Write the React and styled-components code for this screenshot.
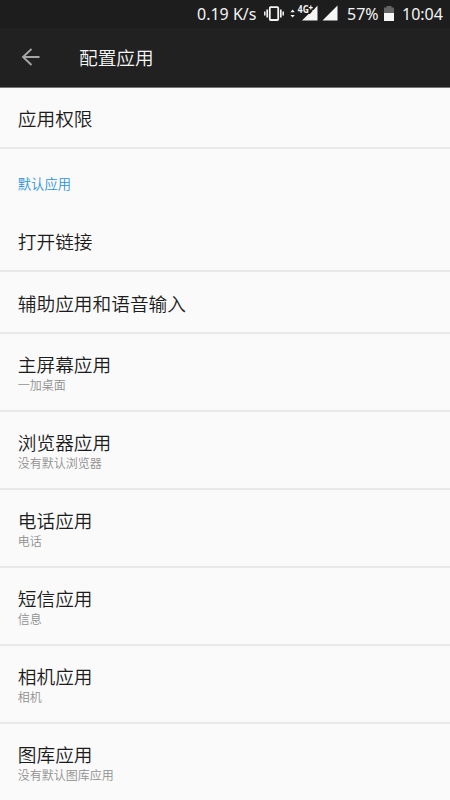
import React from "react";
import styled, { createGlobalStyle } from "styled-components";

const GlobalStyle = createGlobalStyle`
  *, *::before, *::after { box-sizing: border-box; }
  body {
    margin: 0;
    background: #fafafa;
    font-family: "Noto Sans", "Noto Sans CJK SC", sans-serif;
  }
`;

const cjk = `"Noto Sans CJK SC DemiLight", "Noto Sans CJK SC", sans-serif`;

const Screen = styled.div`
  width: 450px;
  height: 800px;
  overflow: hidden;
  display: flex;
  flex-direction: column;
  background: #fafafa;
`;

const StatusBar = styled.div`
  height: 28px;
  flex: none;
  display: flex;
  align-items: center;
  justify-content: flex-end;
  padding-right: 7px;
  background: #1d1d1d;
  color: #f4f4f4;
`;

const StatusText = styled.span`
  width: ${(p) => p.$width}px;
  margin-right: ${(p) => p.$gap || 0}px;
  font-size: 16px;
  line-height: 28px;
  white-space: pre;
`;

const StatusIcon = styled.svg`
  flex: none;
  display: block;
  margin-right: ${(p) => p.$gap}px;
`;

const NetworkLabel = styled.text`
  font: 700 10px "Open Sans", sans-serif;
  fill: #f4f4f4;
`;

const AppBar = styled.header`
  height: 60px;
  flex: none;
  display: flex;
  align-items: center;
  padding: 0 0 2px 20px;
  background: #212121;
  border-bottom: 1px solid #777;
`;

const BackButton = styled.button`
  width: 20px;
  height: 20px;
  padding: 0;
  margin-right: 39px;
  border: 0;
  background: none;
  svg { display: block; }
`;

const Title = styled.h1`
  margin: 0;
  font: 350 18.7px/28px ${cjk};
  color: #f5f5f5;
`;

const List = styled.main`
  flex: 1;
`;

const Row = styled.div`
  height: ${(p) => p.$height}px;
  display: flex;
  flex-direction: column;
  justify-content: center;
  padding: 1px 17.8px 0;
  border-bottom: 2px solid #e9e9e9;
`;

const RowTitle = styled.div`
  font: 350 18.7px/24px ${cjk};
  color: #1c1c1c;
`;

const RowSummary = styled.div`
  font: 350 12px/17px ${cjk};
  color: #909090;
`;

const SectionLabel = styled.h2`
  height: 61px;
  margin: 0;
  padding: 0 17.8px;
  font: 350 13.3px/70px ${cjk};
  color: #2c92dc;
`;

const defaults = [
  { title: "打开链接" },
  { title: "辅助应用和语音输入" },
  { title: "主屏幕应用", summary: "一加桌面" },
  { title: "浏览器应用", summary: "没有默认浏览器" },
  { title: "电话应用", summary: "电话" },
  { title: "短信应用", summary: "信息" },
  { title: "相机应用", summary: "相机" },
  { title: "图库应用", summary: "没有默认图库应用" },
];

function VibrateIcon() {
  return (
    <StatusIcon $gap={6} width="20" height="16" viewBox="0 0 20 16" fill="none" stroke="#f4f4f4">
      <rect x="5.8" y="1.2" width="8.4" height="12.8" rx="0.8" strokeWidth="1.8" />
      <path d="M3.2 3.5v8M16.8 3.5v8" strokeWidth="1.7" />
      <path d="M0.8 5.5v4M19.2 5.5v4" strokeWidth="1.5" />
    </StatusIcon>
  );
}

function MobileDataIcon() {
  return (
    <StatusIcon $gap={4} width="28" height="26" viewBox="0 -4 28 26" fill="#f4f4f4">
      <path d="M0.4 7.2L2.6 4.6L4.8 7.2zM0.4 10L2.6 12.6L4.8 10z" />
      <path d="M27.5 0.5V15.5H12L18.5 9H20L22.5 6V5H23.5z" />
      <NetworkLabel x="7.8" y="8" textLength="11" lengthAdjust="spacingAndGlyphs">4G</NetworkLabel>
      <path d="M18.8 2.6h4M20.8 0.6v4" stroke="#f4f4f4" strokeWidth="1.2" />
    </StatusIcon>
  );
}

function SignalIcon() {
  return (
    <StatusIcon $gap={9} width="16" height="18" viewBox="0 0 16 18">
      <path d="M15.5 0.5V15.5H0.5z" fill="#f4f4f4" />
    </StatusIcon>
  );
}

function BatteryIcon() {
  return (
    <StatusIcon $gap={8} width="10" height="16" viewBox="0 0 10 16">
      <path d="M0 1.5h2.5V0h5v1.5H10V8H0z" fill="#646464" />
      <path d="M0 7h10v8H0z" fill="#f4f4f4" />
    </StatusIcon>
  );
}

export default function App() {
  return (
    <>
      <GlobalStyle />
      <Screen>
        <StatusBar>
          <StatusText $width={60} $gap={7}>0.19 K/s</StatusText>
          <VibrateIcon />
          <MobileDataIcon />
          <SignalIcon />
          <StatusText $width={32} $gap={5}>57%</StatusText>
          <BatteryIcon />
          <StatusText $width={41}>10:04</StatusText>
        </StatusBar>
        <AppBar>
          <BackButton aria-label="返回">
            <svg width="20" height="20" viewBox="0 0 20 20" fill="none" stroke="#a6a6a6" strokeWidth="1.9">
              <path d="M19.5 10H3M11.5 2L3 10L11.5 18" />
            </svg>
          </BackButton>
          <Title>配置应用</Title>
        </AppBar>
        <List>
          <Row $height={61}>
            <RowTitle>应用权限</RowTitle>
          </Row>
          <SectionLabel>默认应用</SectionLabel>
          {defaults.map(({ title, summary }) => (
            <Row key={title} $height={summary ? 78 : 62}>
              <RowTitle>{title}</RowTitle>
              {summary && <RowSummary>{summary}</RowSummary>}
            </Row>
          ))}
        </List>
      </Screen>
    </>
  );
}
